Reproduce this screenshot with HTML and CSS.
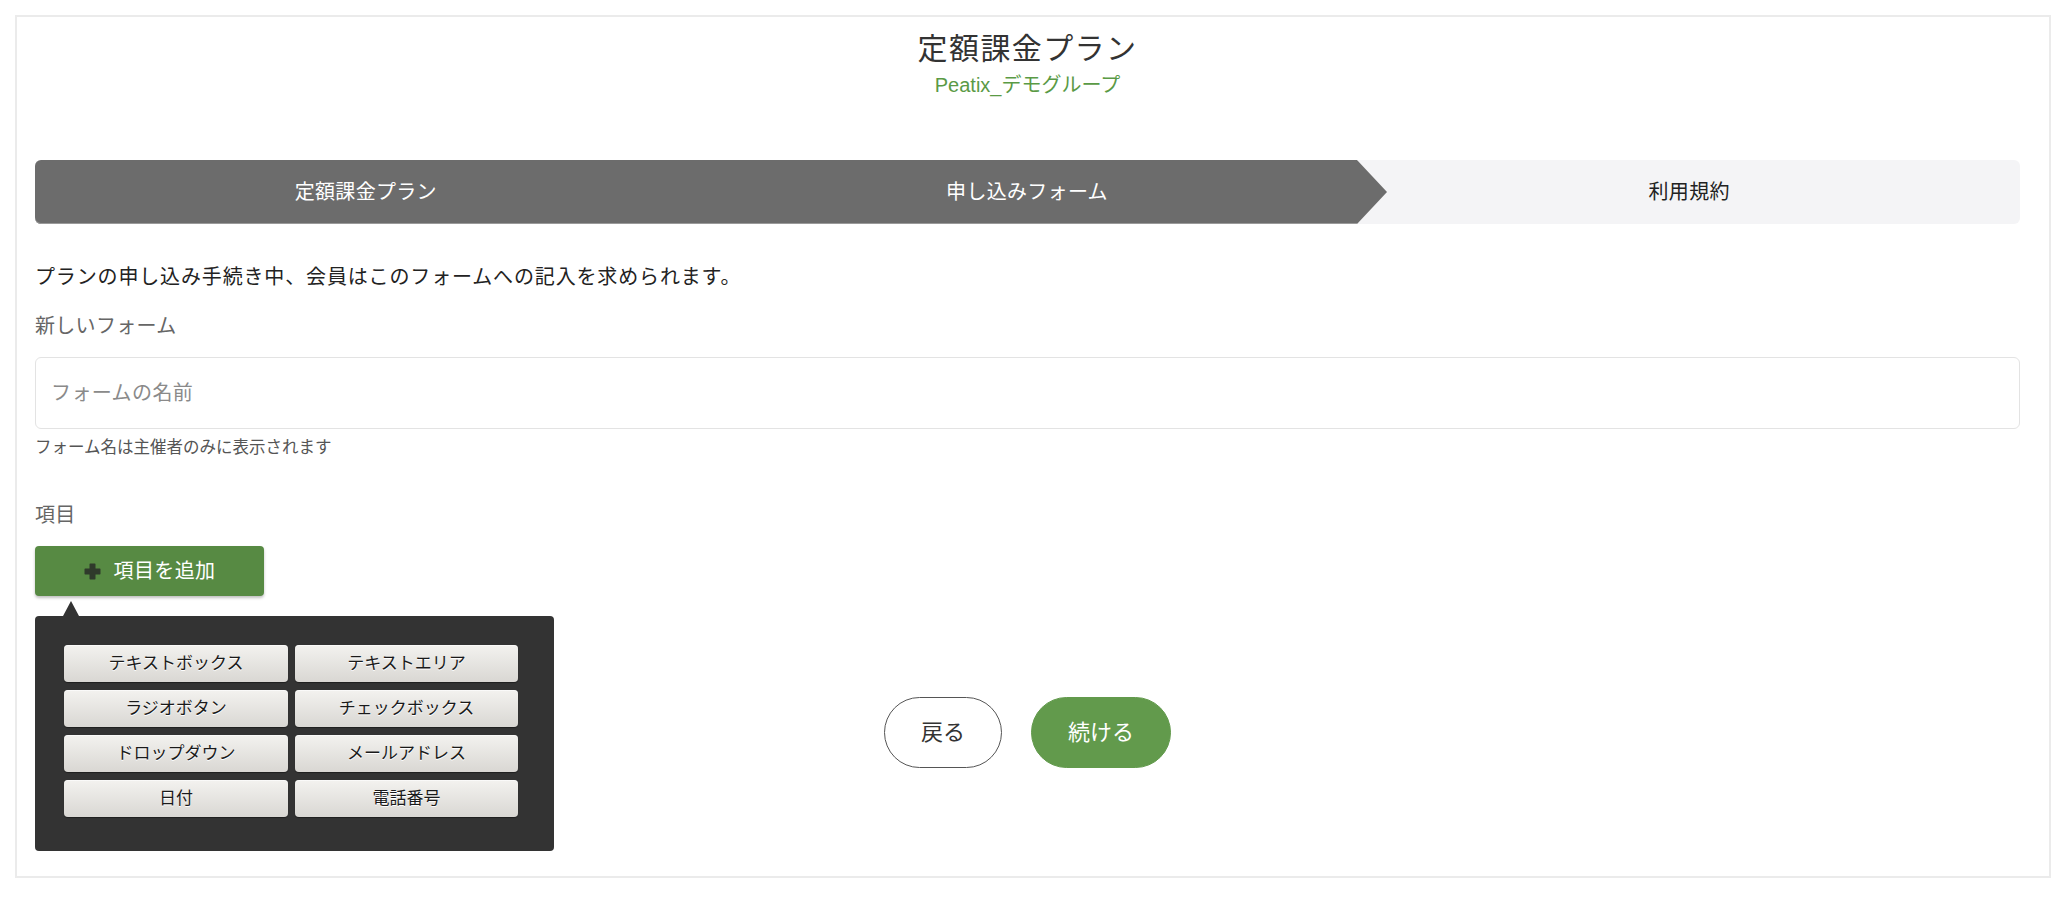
FILE: index.html
```html
<!DOCTYPE html>
<html lang="ja">
<head>
<meta charset="utf-8">
<title>定額課金プラン</title>
<link rel="stylesheet" href="styles.css">
</head>
<body>
<div class="card">
  <header class="head">
    <h1 class="title">定額課金プラン</h1>
    <div class="group">Peatix_デモグループ</div>
  </header>

  <ol class="steps">
    <li class="step done">定額課金プラン</li>
    <li class="step done current">申し込みフォーム</li>
    <li class="step">利用規約</li>
  </ol>

  <p class="desc">プランの申し込み手続き中、会員はこのフォームへの記入を求められます。</p>

  <div class="label">新しいフォーム</div>
  <input class="name-input" type="text" placeholder="フォームの名前">
  <div class="help">フォーム名は主催者のみに表示されます</div>

  <div class="label items-label">項目</div>
  <div class="add-wrap">
    <button class="add-btn" type="button">
      <svg class="plus" width="17" height="17" viewBox="0 0 17 17" aria-hidden="true">
        <path d="M5.5 1.2 Q5.5 0.5 6.2 0.5 H10.8 Q11.5 0.5 11.5 1.2 V5.5 H15.8 Q16.5 5.5 16.5 6.2 V10.8 Q16.5 11.5 15.8 11.5 H11.5 V15.8 Q11.5 16.5 10.8 16.5 H6.2 Q5.5 16.5 5.5 15.8 V11.5 H1.2 Q0.5 11.5 0.5 10.8 V6.2 Q0.5 5.5 1.2 5.5 H5.5 Z" fill="#2f3a2b"/>
      </svg>
      <span>項目を追加</span>
    </button>
    <div class="popover">
      <div class="pop-grid">
        <button class="pop-btn" type="button">テキストボックス</button>
        <button class="pop-btn" type="button">テキストエリア</button>
        <button class="pop-btn" type="button">ラジオボタン</button>
        <button class="pop-btn" type="button">チェックボックス</button>
        <button class="pop-btn" type="button">ドロップダウン</button>
        <button class="pop-btn" type="button">メールアドレス</button>
        <button class="pop-btn" type="button">日付</button>
        <button class="pop-btn" type="button">電話番号</button>
      </div>
    </div>
  </div>

  <div class="footer">
    <button class="pill back" type="button">戻る</button>
    <button class="pill next" type="button">続ける</button>
  </div>
</div>
</body>
</html>
```

FILE: styles.css
```css
* { box-sizing: border-box; }

html, body {
  margin: 0;
  padding: 0;
  background: #ffffff;
}

body {
  font-family: "Liberation Sans", "Noto Sans CJK JP", sans-serif;
  color: #222;
}

.card {
  margin: 15px 17px 20px 15px;
  border: 2px solid #ebebeb;
  padding: 14px 29px 108px 18px;
  background: #fff;
}

.head {
  text-align: center;
}

.title {
  margin: 0;
  font-size: 30px;
  line-height: 36px;
  font-weight: 400;
  letter-spacing: 1.4px;
  color: #333;
}

.group {
  margin-top: 5px;
  font-size: 20px;
  line-height: 26px;
  color: #5a9a45;
}

.steps {
  list-style: none;
  margin: 62px 0 0;
  padding: 0;
  display: grid;
  grid-template-columns: 1fr 1fr 1fr;
  height: 64px;
  border-radius: 6px;
  background: #f4f4f6;
}

.step {
  position: relative;
  display: flex;
  align-items: center;
  justify-content: center;
  font-size: 20px;
  line-height: 28px;
  letter-spacing: 0.3px;
  color: #222;
}

.step.done {
  background: #6c6c6c;
  color: #fff;
  box-shadow: inset 0 -1px 0 #9a9a9a;
}

.step.done:first-child {
  border-radius: 6px 0 0 6px;
}

.step.current {
  border-right: 1px solid #ffffff;
}

.step.current::after {
  content: "";
  position: absolute;
  left: 100%;
  top: 0;
  width: 0;
  height: 0;
  border-left: 30px solid #6c6c6c;
  border-top: 32px solid transparent;
  border-bottom: 32px solid transparent;
  z-index: 1;
}

.desc {
  margin: 39px 0 0;
  font-size: 20px;
  line-height: 28px;
  letter-spacing: 0.85px;
  color: #222;
}

.label {
  margin-top: 21px;
  font-size: 20px;
  line-height: 28px;
  letter-spacing: 0.3px;
  color: #666;
}

.name-input {
  display: block;
  width: 100%;
  height: 72px;
  margin-top: 17px;
  padding: 0 15px;
  border: 1px solid #e3e3e3;
  border-radius: 6px;
  font-family: inherit;
  font-size: 20px;
  letter-spacing: 0.4px;
  color: #333;
  background: #fff;
  outline: none;
}

.name-input::placeholder {
  color: #8a8a8a;
}

.help {
  margin-top: 7px;
  font-size: 16.5px;
  line-height: 22px;
  color: #555;
}

.items-label {
  margin-top: 43px;
}

.add-wrap {
  position: relative;
  margin-top: 17px;
  width: 229px;
}

.add-btn {
  display: flex;
  align-items: center;
  justify-content: center;
  gap: 13px;
  width: 229px;
  height: 50px;
  padding: 0;
  border: 0;
  border-radius: 4px;
  background: #578a43;
  color: #fff;
  font-family: inherit;
  font-size: 20px;
  line-height: 28px;
  letter-spacing: 0.4px;
  box-shadow: 0 2px 3px rgba(0, 0, 0, 0.25);
}

.plus {
  display: block;
  flex: none;
}

.popover {
  position: absolute;
  top: 70px;
  left: 0;
  width: 519px;
  height: 235px;
  padding: 29px 36px 0 29px;
  background: #333333;
  border-radius: 4px;
  z-index: 5;
}

.popover::before {
  content: "";
  position: absolute;
  left: 28px;
  top: -15px;
  width: 0;
  height: 0;
  border-bottom: 15px solid #333333;
  border-left: 8px solid transparent;
  border-right: 8px solid transparent;
}

.pop-grid {
  display: grid;
  grid-template-columns: 224px 223px;
  column-gap: 7px;
  row-gap: 8px;
}

.pop-btn {
  height: 37px;
  padding: 0;
  border: 0;
  border-radius: 4px;
  background: linear-gradient(#f3f2ef, #d9d7d3);
  color: #1a1a1a;
  font-family: inherit;
  font-size: 17px;
  line-height: 22px;
  text-shadow: 0 1px 0 #ffffff;
  box-shadow: inset 0 1px 0 rgba(255, 255, 255, 0.6), 0 1px 1px rgba(0, 0, 0, 0.4);
}

.footer {
  display: flex;
  justify-content: center;
  gap: 29px;
  margin-top: 101px;
}

.pill {
  height: 71px;
  padding: 0 36px;
  border-radius: 36px;
  font-family: inherit;
  font-size: 22px;
  line-height: 30px;
}

.back {
  border: 1px solid #555;
  background: #fff;
  color: #333;
}

.next {
  border: 1px solid #629a4c;
  background: #629a4c;
  color: #fff;
}
```
